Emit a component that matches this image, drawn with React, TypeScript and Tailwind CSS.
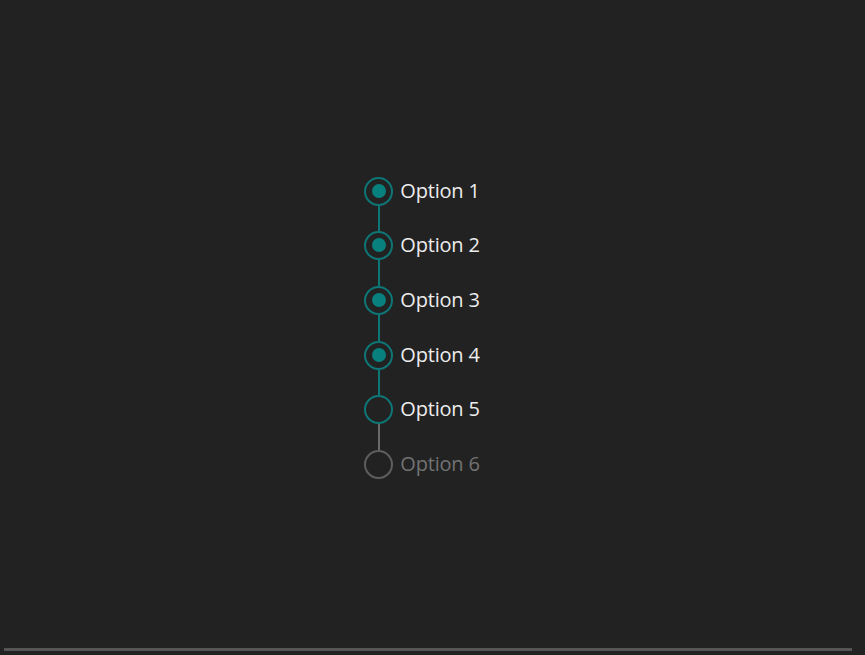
import React from 'react'

const options = [
  { label: 'Option 1', state: 'done', line: 'h-[25px] bg-[#0e7676]' },
  { label: 'Option 2', state: 'done', line: 'h-[26px] bg-[#0e7676]' },
  { label: 'Option 3', state: 'done', line: 'h-[26px] bg-[#0e7676]' },
  { label: 'Option 4', state: 'done', line: 'h-[25px] bg-[#0e7676]' },
  { label: 'Option 5', state: 'current', line: 'h-[26px] bg-[#6a6a6a]' },
  { label: 'Option 6', state: 'todo', line: '' },
]

export default function App() {
  return (
    <div
      className="h-[655px] w-[865px] bg-[#222222] flex flex-col"
      style={{ fontFamily: '"Open Sans", "Noto Sans", sans-serif' }}
    >
      <div className="flex-1 flex items-center justify-center">
        <ul className="mr-[21px] mt-[7px]">
          {options.map((opt, i) => (
            <li key={opt.label} className="flex flex-col">
              <div className="flex items-center gap-[7px]">
                <div
                  className={
                    'h-[29px] w-[29px] rounded-full border-2 flex items-center justify-center ' +
                    (opt.state === 'todo' ? 'border-[#5e5e5e]' : 'border-[#0e7676]')
                  }
                >
                  {opt.state === 'done' && (
                    <div className="h-[14px] w-[14px] rounded-full bg-[#08807e]" />
                  )}
                </div>
                <span
                  className={
                    'text-[20px] leading-none tracking-[-0.2px] ' +
                    (opt.state === 'todo' ? 'text-[#727272]' : 'text-[#ededed]')
                  }
                >
                  {opt.label}
                </span>
              </div>
              {i < options.length - 1 && (
                <div className={'ml-[13.5px] w-[2px] ' + opt.line} />
              )}
            </li>
          ))}
        </ul>
      </div>
      <div className="mx-[4px] mb-[4px] h-[3px] w-[848px] bg-[#555555]" />
    </div>
  )
}
